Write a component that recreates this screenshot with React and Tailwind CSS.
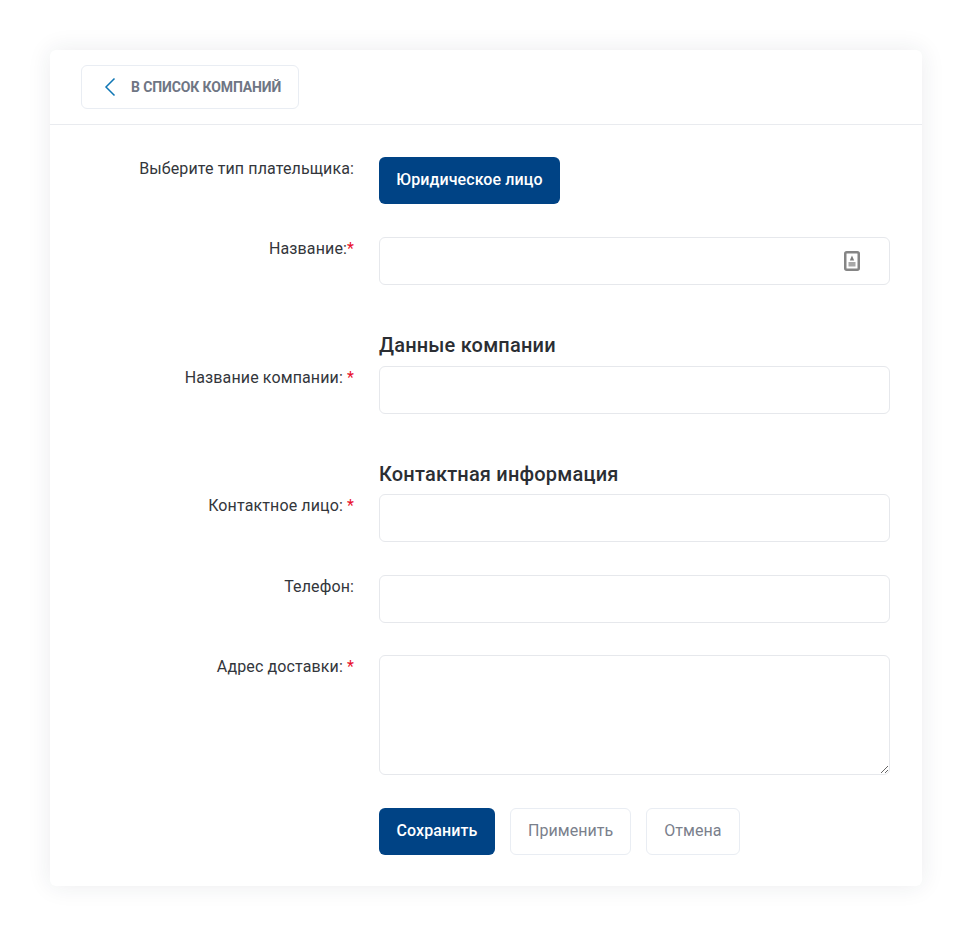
const inputCls = 'block w-full h-12 rounded-md border border-[#e6e8ec] bg-white px-4 text-base text-[#333] outline-none';
const primaryCls = 'h-[47px] rounded-md bg-[#004385] pb-[2px] text-base font-medium tracking-[0.1px] text-white';
const secondaryCls = 'h-[47px] rounded-md border border-[#e9edf3] bg-white px-[17px] pb-[2px] text-base tracking-[0.05px] text-[#7a808c]';

function Label({ text, star, tight }) {
  return (
    <label className="w-[304px] shrink-0 text-right text-base leading-6 tracking-[0.12px] text-[#33363b]">
      {text}
      {star && <span className="text-[#e8112d]">{tight ? '*' : ' *'}</span>}
    </label>
  );
}

function Heading({ children }) {
  return <h3 className="ml-[329px] text-xl leading-6 font-medium tracking-[0.19px] text-[#2b2e33]">{children}</h3>;
}

export default function App() {
  return (
    <div className="min-h-[939px] bg-white pt-[50px] pl-[50px] pr-[48px] font-['Roboto',sans-serif]">
      <div className="h-[836px] rounded-md bg-white shadow-[0_0_24px_rgba(30,40,70,0.09)]">
        {/* Header */}
        <div className="flex h-[75px] items-start border-b border-[#e9ebef] pt-[15px] pl-[31px]">
          <button className="flex h-[44px] w-[218px] items-center rounded-md border border-[#e9edf3] bg-white pl-[22px]">
            <svg className="h-[20px] w-[12px]" viewBox="0 0 12 20" fill="none">
              <path d="M10.5 1.5L2 10l8.5 8.5" stroke="#0f76b4" strokeWidth="1.5" />
            </svg>
            <span className="ml-[15px] text-sm font-bold tracking-[-0.12px] text-[#6f7684]">В СПИСОК КОМПАНИЙ</span>
          </button>
        </div>

        <form className="flex flex-col pt-8 pr-8">
          <div className="flex gap-[25px]">
            <Label text="Выберите тип плательщика:" />
            <button type="button" className={`${primaryCls} w-[181px]`}>
              Юридическое лицо
            </button>
          </div>

          <div className="mt-[33px] flex gap-[25px]">
            <Label text="Название:" star tight />
            <div className="relative grow">
              <input className={inputCls} />
              <svg className="absolute top-[14px] right-[30px] h-[20px] w-[16px]" viewBox="0 0 16 20" fill="none">
                <rect x="1.25" y="1.25" width="13.5" height="17.5" rx="1.5" stroke="#858585" strokeWidth="2.5" />
                <path d="M8 4.5l2.2 5H5.8z" fill="#7d7d7d" />
                <rect x="4.5" y="11" width="7" height="4.5" fill="#a8a8a8" />
              </svg>
            </div>
          </div>

          <div className="mt-[48px]">
            <Heading>Данные компании</Heading>
          </div>
          <div className="mt-[9px] flex gap-[25px]">
            <Label text="Название компании:" star />
            <input className={inputCls} />
          </div>

          <div className="mt-[48px]">
            <Heading>Контактная информация</Heading>
          </div>
          <div className="mt-2 flex gap-[25px]">
            <Label text="Контактное лицо:" star />
            <input className={inputCls} />
          </div>

          <div className="mt-[33px] flex gap-[25px]">
            <Label text="Телефон:" />
            <input className={inputCls} />
          </div>

          <div className="mt-8 flex gap-[25px]">
            <Label text="Адрес доставки:" star />
            <textarea className="block h-[120px] w-full rounded-md border border-[#e6e8ec] bg-white px-4 py-3 text-base text-[#333] outline-none" />
          </div>

          <div className="mt-[33px] ml-[329px] flex items-start gap-[15px]">
            <button type="button" className={`${primaryCls} w-[116px]`}>
              Сохранить
            </button>
            <button type="button" className={secondaryCls}>
              Применить
            </button>
            <button type="button" className={secondaryCls}>
              Отмена
            </button>
          </div>
        </form>
      </div>
    </div>
  );
}
